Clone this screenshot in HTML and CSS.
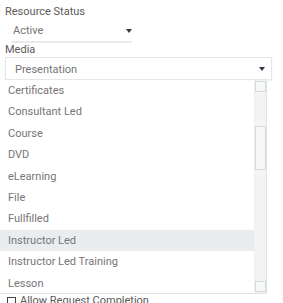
FILE: index.html
```html
<!DOCTYPE html>
<html lang="en">
<head>
  <meta charset="UTF-8" />
  <meta name="viewport" content="width=device-width, initial-scale=1.0" />
  <title>Resource</title>
  <link rel="stylesheet" href="styles.css">
</head>
<body>
  <div class="field">
    <label class="field-label">Resource Status</label>
    <div class="status-select">
      <span>Active</span>
      <span class="caret"></span>
    </div>
  </div>

  <div class="field">
    <label class="field-label media-label">Media</label>
    <div class="media-select">
      <span>Presentation</span>
      <span class="caret"></span>
    </div>
    <div class="dropdown">
      <ul class="options">
        <li>Certificates</li>
        <li>Consultant Led</li>
        <li>Course</li>
        <li>DVD</li>
        <li>eLearning</li>
        <li>File</li>
        <li>Fullfilled</li>
        <li class="hover">Instructor Led</li>
        <li>Instructor Led Training</li>
        <li>Lesson</li>
      </ul>
      <div class="scrollbar">
        <div class="sb-btn"></div>
        <div class="sb-thumb"></div>
        <div class="sb-btn sb-bottom"></div>
      </div>
    </div>
  </div>

  <label class="check-row">
    <span class="checkbox"></span>
    Allow Request Completion
  </label>
</body>
</html>
```

FILE: styles.css
```css
body {
  margin: 0;
  padding: 4px 0 0;
  font-family: Roboto, "Liberation Sans", sans-serif;
  font-size: 11px;
  color: #757575;
  background: #fff;
}
.field-label {
  display: block;
  padding-left: 5px;
  line-height: 16px;
  color: #5a5a5a;
}
.media-label {
  line-height: 14px;
}
.status-select {
  display: flex;
  align-items: center;
  justify-content: space-between;
  box-sizing: border-box;
  width: 120px;
  height: 23px;
  margin-left: 12px;
  padding: 0 0 0 1px;
  border-bottom: 2px solid #eaeaea;
}
.caret {
  width: 0;
  height: 0;
  border-left: 3px solid transparent;
  border-right: 3px solid transparent;
  border-top: 4px solid #2b3a48;
}
.media-select {
  display: flex;
  align-items: center;
  justify-content: space-between;
  box-sizing: border-box;
  height: 23px;
  margin: 0 11px 0 5px;
  padding: 1px 6px 0 9px;
  border: 1px solid #e6e6e6;
  box-shadow: 0 1px 2px rgba(0, 0, 0, 0.06);
}
.dropdown {
  display: flex;
  width: 267px;
  height: 214px;
  box-sizing: border-box;
  border: 1px solid #e2e2e2;
  border-top: none;
  border-left: none;
  background: #fff;
}
.options {
  flex: 1;
  list-style: none;
  margin: 0;
  padding: 0;
}
.options li {
  height: 21.4px;
  line-height: 22px;
  padding-left: 8px;
}
.options li.hover {
  background: #eaedf0;
}
.scrollbar {
  width: 12px;
  display: flex;
  flex-direction: column;
  background: #f2f4f5;
  border-left: 1px solid #f0f0f0;
  box-sizing: border-box;
  padding-top: 1px;
}
.sb-btn {
  height: 11px;
  box-sizing: border-box;
  border: 1px solid #d6dbde;
  background: #f5f7f8;
}
.sb-thumb {
  height: 44px;
  margin-top: 34px;
  box-sizing: border-box;
  border: 1px solid #d6dbde;
  background: #f5f7f8;
}
.sb-bottom {
  margin-top: auto;
  margin-bottom: 1px;
}
.check-row {
  display: flex;
  align-items: center;
  gap: 4px;
  padding: 1px 0 0 7px;
  color: #5a5a5a;
  line-height: 12px;
}
.checkbox {
  width: 9px;
  height: 9px;
  box-sizing: border-box;
  border: 1px solid #444;
}
```
